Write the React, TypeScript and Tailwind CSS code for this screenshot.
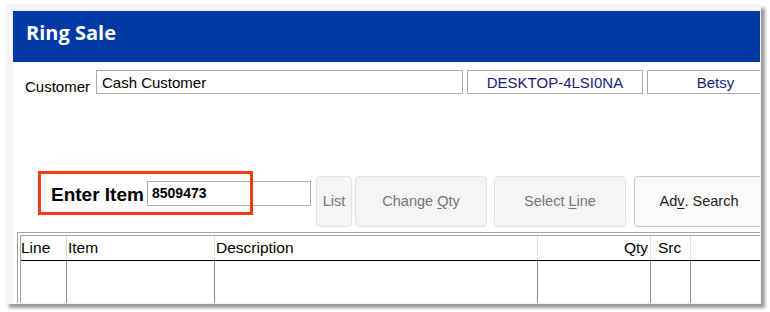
import React from 'react';

const sans = { fontFamily: '"Liberation Sans", Arial, sans-serif' };

function ActionButton({ children, disabled, className }: { children: React.ReactNode; disabled?: boolean; className?: string }) {
  return (
    <button
      className={`h-[51px] shrink-0 rounded-[4px] border text-[14.5px] flex items-center justify-center ${
        disabled ? 'bg-[#f5f5f5] border-[#e2e2e2] text-[#747474]' : 'bg-[#fbfbfb] border-[#c4c4c4] text-[#1c1c1c]'
      } ${className ?? ''}`}
    >
      {children}
    </button>
  );
}

export default function App() {
  return (
    <div className="w-[770px] h-[312px] bg-white relative overflow-hidden" style={sans}>
      {/* outer frame */}
      <div className="ml-[5px] mt-[4px] w-[756px] h-[300px] bg-[#f2f5fa] pl-[8px] pt-[7px] shadow-[4px_4px_3px_rgba(0,0,0,0.4)]">
        <div className="w-[747px] h-[292px] bg-white flex flex-col overflow-hidden">
          {/* header */}
          <div className="h-[51px] shrink-0 bg-[#0039a6] flex items-center pl-[13px] pb-[7px]">
            <h1 className="text-white font-bold text-[20px]" style={{ fontFamily: '"Open Sans", "Noto Sans", sans-serif' }}>
              Ring Sale
            </h1>
          </div>

          {/* customer row */}
          <div className="flex items-start mt-[8px] pl-[12px] h-[24px] shrink-0">
            <span className="text-[15px] leading-[22px] text-black w-[71px] shrink-0 mt-[6px]">Customer</span>
            <div className="w-[367px] shrink-0 h-[24px] border border-[#ababab] px-[5px] pt-[1px] text-[15px] leading-[22px] text-black">Cash Customer</div>
            <div className="ml-[4px] w-[176px] shrink-0 h-[24px] border border-[#ababab] pt-[1px] text-[15px] leading-[22px] text-[#1a1a7e] text-center">DESKTOP-4LSI0NA</div>
            <div className="ml-[4px] w-[137px] shrink-0 h-[24px] border border-[#ababab] pt-[1px] text-[15px] leading-[22px] text-[#1a1a7e] text-center">Betsy</div>
          </div>

          {/* item entry row */}
          <div className="flex items-start mt-[82px] pl-[38px] h-[51px] shrink-0">
            <span className="text-[19px] leading-[28px] font-bold text-black w-[96px] shrink-0 mt-[5px]">Enter Item</span>
            <div className="mt-[5px] w-[164px] shrink-0 h-[25px] border border-[#ababab] px-[4px] pt-[2px] text-[14px] font-bold leading-[18px] text-black">8509473</div>
            <ActionButton disabled className="ml-[5px] w-[36px]">List</ActionButton>
            <ActionButton disabled className="ml-[3px] w-[132px]">
              Change&nbsp;<u className="underline-offset-2">Q</u>ty
            </ActionButton>
            <ActionButton disabled className="ml-[7px] w-[132px]">
              Select&nbsp;<u className="underline-offset-2">L</u>ine
            </ActionButton>
            <ActionButton className="ml-[8px] w-[130px] rounded-r-none">
              Ad<u className="underline-offset-2">v</u>.&nbsp;Search
            </ActionButton>
          </div>

          {/* table */}
          <div className="mt-[5px] ml-[4px] flex-1 border-t border-l border-[#a3a3a3] pt-[2px] pl-[2px]">
            <div className="h-full border-t border-l border-[#a3a3a3] flex flex-col">
              <div className="flex h-[25px] shrink-0 border-b border-black text-[15.5px] text-black leading-[24px]">
                <div className="w-[46px] shrink-0 border-r border-[#e0e0e0]">Line</div>
                <div className="w-[148px] shrink-0 border-r border-[#e0e0e0] pl-[1px]">Item</div>
                <div className="w-[323px] shrink-0 border-r border-[#e0e0e0] pl-[1px]">Description</div>
                <div className="w-[113px] shrink-0 border-r border-[#e0e0e0] text-right pr-[2px]">Qty</div>
                <div className="w-[40px] shrink-0 border-r border-[#e0e0e0] pl-[7px]">Src</div>
                <div className="flex-1" />
              </div>
              <div className="flex flex-1">
                <div className="w-[46px] shrink-0 border-r border-[#8a8a8a]" />
                <div className="w-[148px] shrink-0 border-r border-[#8a8a8a]" />
                <div className="w-[323px] shrink-0 border-r border-[#8a8a8a]" />
                <div className="w-[113px] shrink-0 border-r border-[#8a8a8a]" />
                <div className="w-[40px] shrink-0 border-r border-[#8a8a8a]" />
                <div className="flex-1" />
              </div>
            </div>
          </div>
        </div>
      </div>

      {/* red annotation box */}
      <div className="absolute left-[38px] top-[171px] w-[215px] h-[44px] border-[3px] border-[#f23c12]" />
    </div>
  );
}
